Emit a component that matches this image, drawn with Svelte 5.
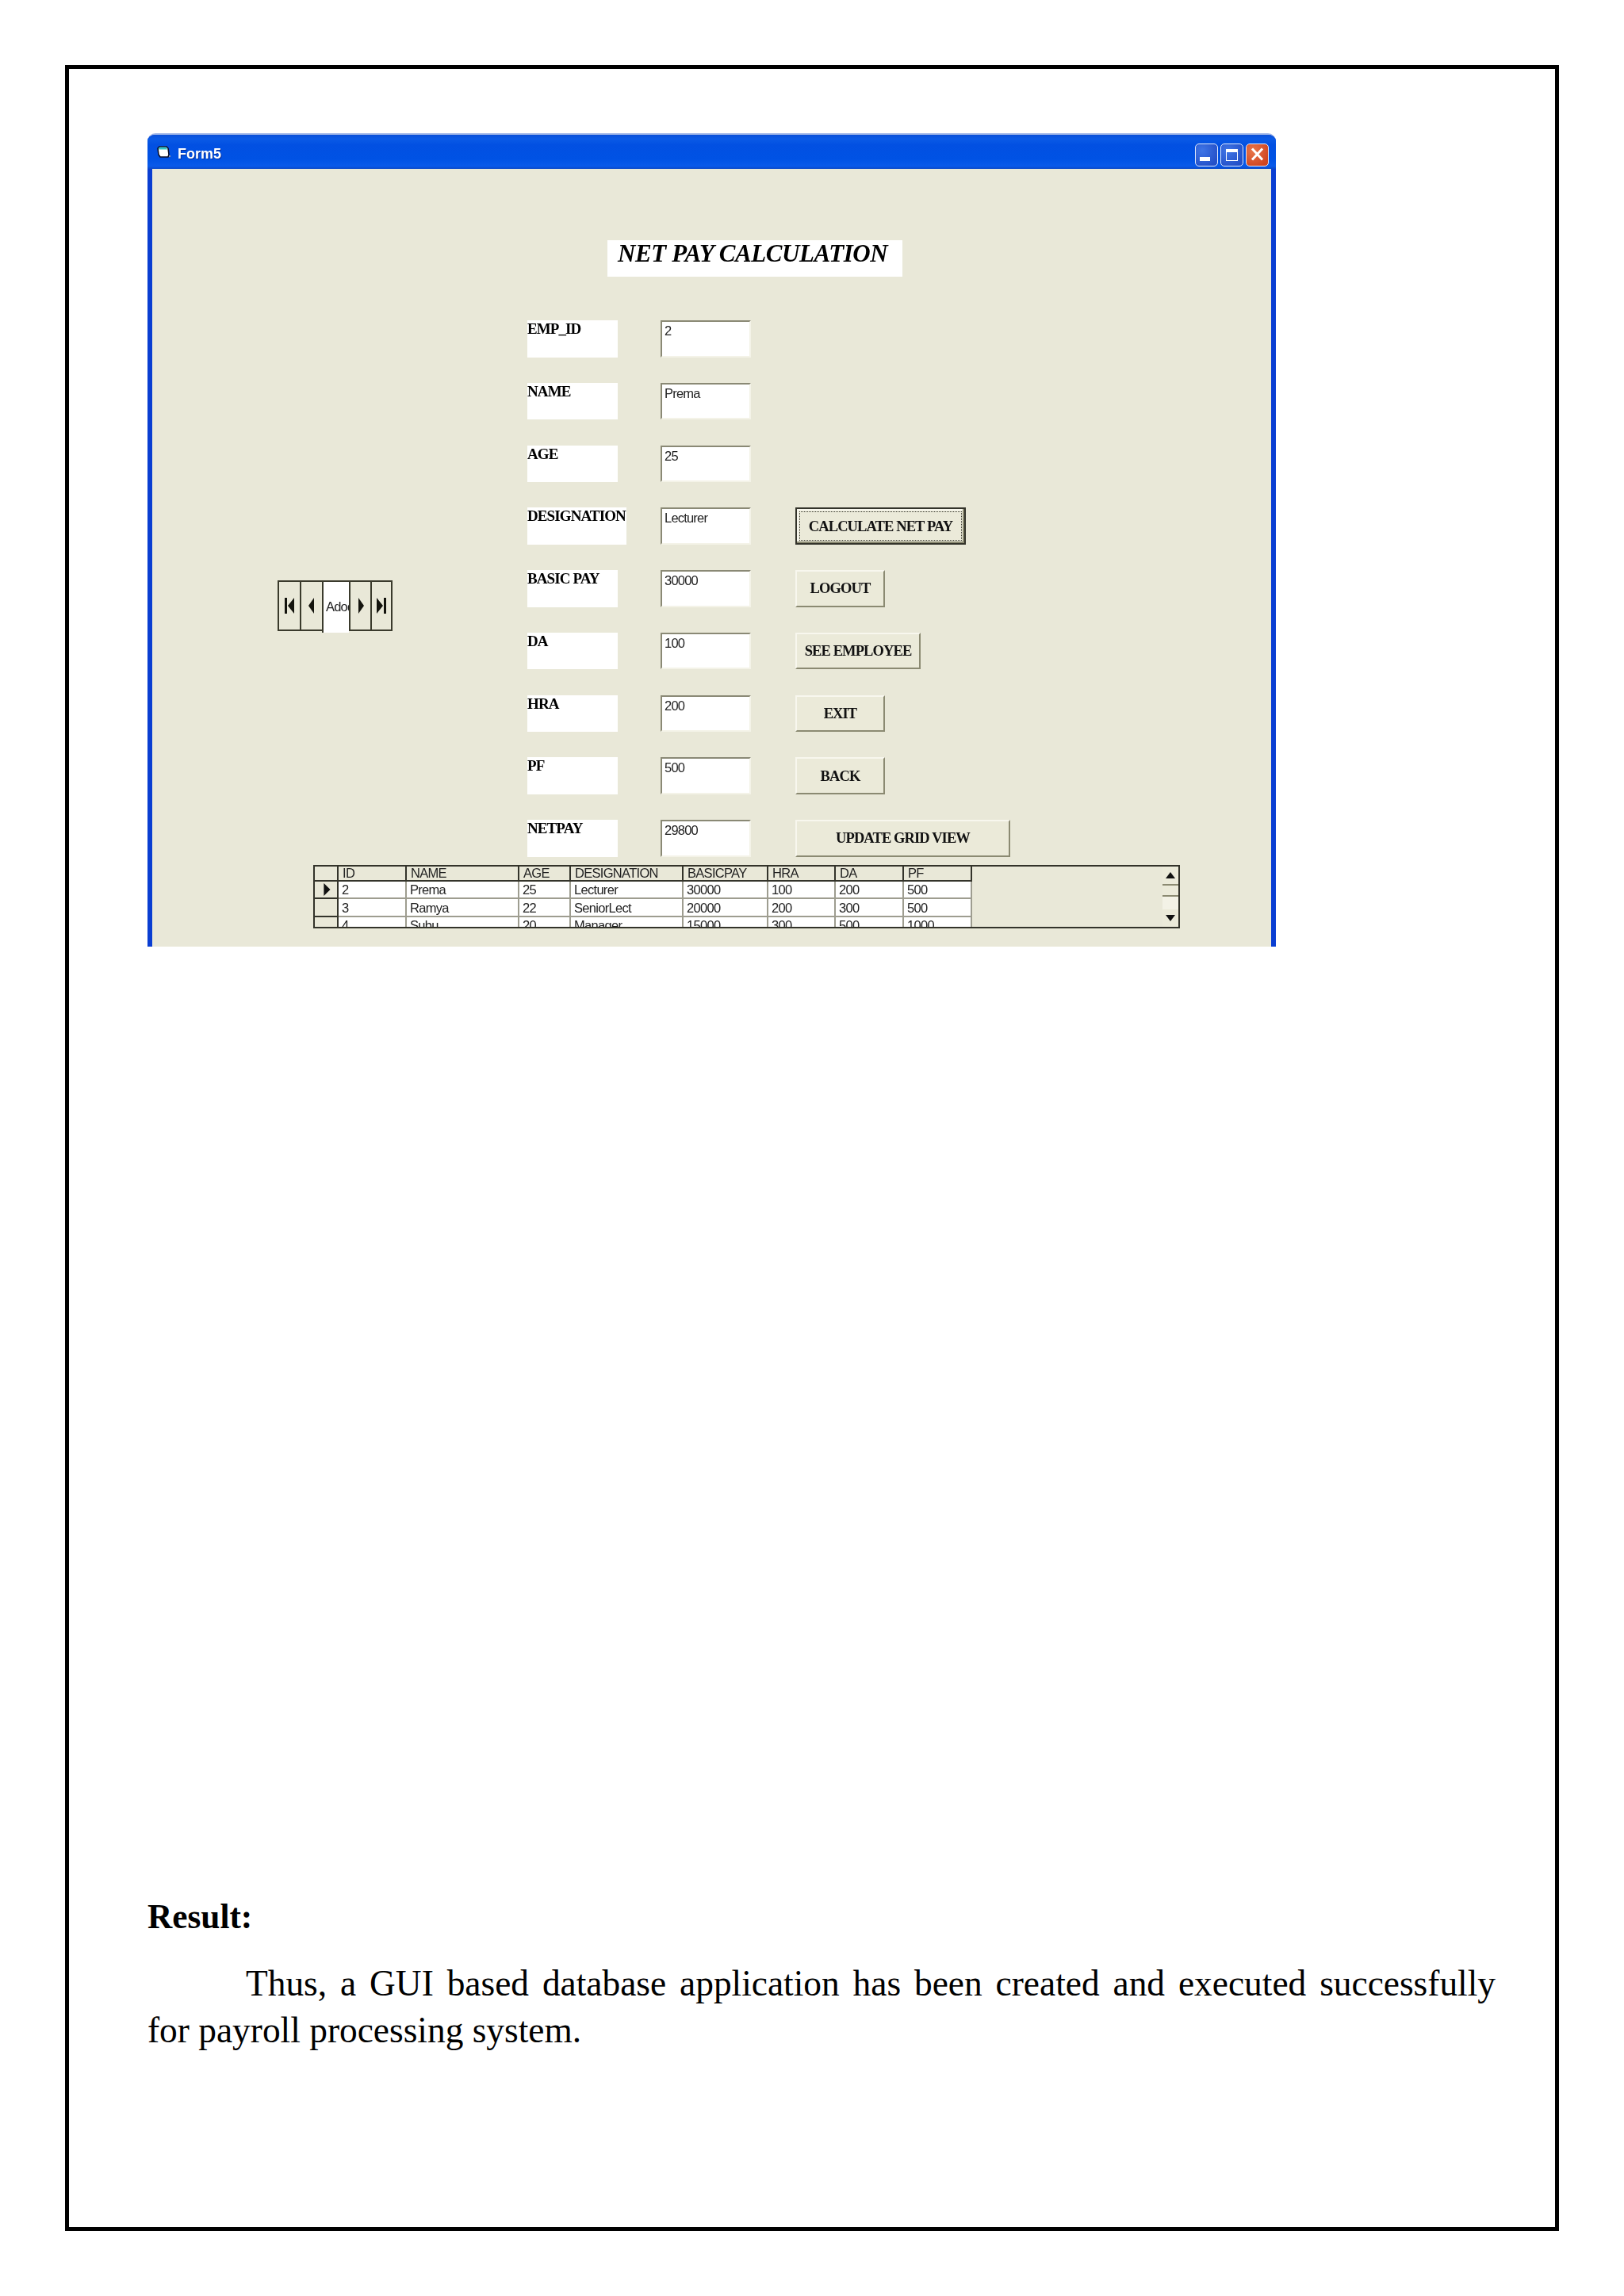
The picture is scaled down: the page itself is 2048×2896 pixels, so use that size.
<script>
  const fields = [
    { label: 'EMP_ID', value: '2' },
    { label: 'NAME', value: 'Prema' },
    { label: 'AGE', value: '25' },
    { label: 'DESIGNATION', value: 'Lecturer', wide: true, btn: 'CALCULATE NET PAY', size: 'calc' },
    { label: 'BASIC PAY', value: '30000', btn: 'LOGOUT', size: 'small' },
    { label: 'DA', value: '100', btn: 'SEE EMPLOYEE', size: 'emp' },
    { label: 'HRA', value: '200', btn: 'EXIT', size: 'small' },
    { label: 'PF', value: '500', btn: 'BACK', size: 'small' },
    { label: 'NETPAY', value: '29800', btn: 'UPDATE GRID VIEW', size: 'update' }
  ];

  const columns = [
    { name: 'ID', w: 86 },
    { name: 'NAME', w: 142 },
    { name: 'AGE', w: 65 },
    { name: 'DESIGNATION', w: 142 },
    { name: 'BASICPAY', w: 107 },
    { name: 'HRA', w: 85 },
    { name: 'DA', w: 86 },
    { name: 'PF', w: 86 }
  ];

  const rows = [
    ['2', 'Prema', '25', 'Lecturer', '30000', '100', '200', '500'],
    ['3', 'Ramya', '22', 'SeniorLect', '20000', '200', '300', '500'],
    ['4', 'Subu', '20', 'Manager', '15000', '300', '500', '1000']
  ];
</script>

<div class="page">
  <div class="frame">
    <div class="window">
      <div class="titlebar">
        <svg class="form-icon" viewBox="0 0 17 16" width="17" height="16">
          <path d="M1 3l2-2h9l2 2 1 8-1 3H4l-2-3z" fill="#fff" stroke="#0a0f2a" stroke-width="1.6" />
          <path d="M2 3l1.4-1.2h8.2L13 4.6H2.4z" fill="#2fc4c4" />
          <path d="M15 12h2v2h-2z" fill="#8a93b0" />
        </svg>
        <span class="caption">Form5</span>
        <div class="caption-btns">
          <span class="cbtn"><i class="min"></i></span>
          <span class="cbtn"><i class="max"></i></span>
          <span class="cbtn close">
            <svg viewBox="0 0 29 29" width="29" height="29">
              <path d="M8 7.5l13 14M21 7.5l-13 14" stroke="#fff" stroke-width="3" fill="none" />
            </svg>
          </span>
        </div>
      </div>

      <div class="client">
        <div class="heading">NET PAY CALCULATION</div>

        <div class="form">
          <div class="nav">
            <span class="navbtn">
              <svg viewBox="0 0 14 22" width="14" height="22"><path d="M1 1h3v20H1zM13 1v20L5 11z" /></svg>
            </span>
            <span class="navbtn">
              <svg viewBox="0 0 14 22" width="14" height="22"><path d="M10 1v20L3 11z" /></svg>
            </span>
            <span class="navtext">Adodc1</span>
            <span class="navbtn">
              <svg viewBox="0 0 14 22" width="14" height="22"><path d="M4 1v20l7-10z" /></svg>
            </span>
            <span class="navbtn last">
              <svg viewBox="0 0 14 22" width="14" height="22"><path d="M1 1v20l8-10zM10 1h3v20h-3z" /></svg>
            </span>
          </div>

          <div class="fields">
            {#each fields as f}
              <div class="label" class:wide={f.wide}>{f.label}</div>
              <div class="input">{f.value}</div>
              {#if f.btn}
                <button class="btn {f.size}"><span>{f.btn}</span></button>
              {:else}
                <div></div>
              {/if}
            {/each}
          </div>
        </div>

        <div class="grid">
          <table>
            <colgroup>
              <col style="width: 30px" />
              {#each columns as c}
                <col style="width: {c.w}px" />
              {/each}
            </colgroup>
            <thead>
              <tr>
                <th class="corner"></th>
                {#each columns as c}
                  <th>{c.name}</th>
                {/each}
              </tr>
            </thead>
            <tbody>
              {#each rows as row, i}
                <tr>
                  <td class="rowhead">
                    {#if i === 0}
                      <svg viewBox="0 0 12 20" width="12" height="18"><path d="M2 1v18l9-9z" /></svg>
                    {/if}
                  </td>
                  {#each row as cell}
                    <td>{cell}</td>
                  {/each}
                </tr>
              {/each}
            </tbody>
          </table>
          <div class="scrollbar">
            <div class="sbtn"><svg viewBox="0 0 12 8" width="12" height="8"><path d="M6 0l6 8H0z" /></svg></div>
            <div class="sthumb"></div>
            <div class="strack"></div>
            <div class="sbtn"><svg viewBox="0 0 12 8" width="12" height="8"><path d="M0 0h12L6 8z" /></svg></div>
          </div>
        </div>
      </div>
    </div>

    <div class="result">
      <h2>Result:</h2>
      <p class="first">Thus, a GUI based database application has been created and executed successfully</p>
      <p>for payroll processing system.</p>
    </div>
  </div>
</div>

<style>
  :global(body) {
    margin: 0;
    background: #fff;
  }

  .page {
    width: 2048px;
    height: 2896px;
    padding: 82px 82px 0;
    box-sizing: border-box;
    background: #fff;
    overflow: hidden;
  }

  .frame {
    height: 2732px;
    border: 5px solid #000;
    box-sizing: border-box;
    padding: 81px 0 0 99px;
  }

  .window {
    width: 1423px;
    height: 1026px;
    border-top: 2px solid #a3b8e8;
    border-radius: 10px 10px 0 0;
    box-sizing: border-box;
    overflow: hidden;
    background: #0a3ed2;
    display: flex;
    flex-direction: column;
    filter: blur(0.5px);
  }

  .titlebar {
    height: 43px;
    flex: none;
    display: flex;
    align-items: center;
    padding: 0 9px 0 12px;
    background: linear-gradient(#0a50d8 0, #0a5ae6 12%, #0250e2 30%, #0052e4 70%, #0a5aea 92%, #0a48c8 100%);
  }

  .form-icon {
    flex: none;
    margin-top: 1px;
  }

  .caption {
    margin: 4px 0 0 9px;
    color: #fff;
    font: bold 18px/20px "Liberation Sans", sans-serif;
    text-shadow: 1px 1px 0 #0a2f9a;
  }

  .caption-btns {
    margin-left: auto;
    margin-top: 7px;
    display: flex;
    gap: 3px;
  }

  .cbtn {
    width: 29px;
    height: 29px;
    box-sizing: border-box;
    border: 1.5px solid #dfe8fb;
    border-radius: 5px;
    background: radial-gradient(circle at 30% 30%, #3f75e6, #2450c8 80%);
    display: flex;
    align-items: center;
    justify-content: center;
    position: relative;
  }

  .cbtn i {
    display: block;
    background: #fff;
  }

  .cbtn .min {
    width: 13px;
    height: 5px;
    margin: 11px 4px 0 0;
  }

  .cbtn .max {
    width: 15px;
    height: 15px;
    box-sizing: border-box;
    background: transparent;
    border: 1.5px solid #fff;
    border-top-width: 4px;
  }

  .cbtn.close {
    background: radial-gradient(circle at 30% 30%, #e8764a, #cf4420 80%);
  }

  .cbtn.close svg {
    position: absolute;
    left: -1.5px;
    top: -1.5px;
  }

  .client {
    flex: 1;
    margin: 0 6px;
    background: #e9e8d8;
    display: flex;
    flex-direction: column;
    align-items: flex-start;
    min-height: 0;
  }

  .heading {
    margin: 90px 0 0 574px;
    width: 372px;
    height: 46px;
    box-sizing: border-box;
    padding: 1px 0 0 13px;
    background: #fff;
    color: #000;
    font: italic bold 31px/32px "Liberation Serif", serif;
    letter-spacing: -0.4px;
    white-space: nowrap;
  }

  .form {
    margin: 55px 0 0 158px;
    display: flex;
    align-items: flex-start;
  }

  .nav {
    width: 145px;
    height: 67px;
    margin: 328px 170px 0 0;
    flex: none;
    display: flex;
    box-sizing: border-box;
    background: #e9e8d8;
  }

  .navbtn {
    width: 28px;
    height: 64px;
    box-sizing: border-box;
    border: 2px solid #3a3a2c;
    border-right: 0;
    display: flex;
    align-items: center;
    justify-content: center;
  }

  .navbtn.last {
    border-right: 2px solid #3a3a2c;
    width: 28px;
  }

  .navbtn svg {
    fill: #14140e;
  }

  .navtext {
    width: 34px;
    height: 66px;
    box-sizing: border-box;
    background: #fff;
    border-left: 2px solid #3a3a2c;
    border-top: 2px solid #3a3a2c;
    overflow: hidden;
    padding: 21px 0 0 3px;
    font: 16.5px/20px "Liberation Sans", sans-serif;
    letter-spacing: -0.8px;
    color: #222;
    white-space: nowrap;
  }

  .navtext + .navbtn {
    border-left: 2px solid #3a3a2c;
    width: 27px;
  }

  .fields {
    display: grid;
    grid-template-columns: 168px 170px auto;
    grid-auto-rows: 46.5px;
    row-gap: 32.25px;
  }

  .label {
    width: 114px;
    height: 46.5px;
    background: #fff;
    color: #000;
    font: bold 19px/21px "Liberation Serif", serif;
    letter-spacing: -0.9px;
    white-space: nowrap;
  }

  .label.wide {
    width: 125px;
  }

  .input {
    width: 114px;
    height: 46.5px;
    box-sizing: border-box;
    background: #fff;
    border-top: 2px solid #8a8975;
    border-left: 2px solid #8a8975;
    border-right: 2px solid #f4f3e8;
    border-bottom: 2px solid #f4f3e8;
    padding: 1px 0 0 3px;
    color: #222;
    font: 16.5px/20px "Liberation Sans", sans-serif;
    letter-spacing: -0.8px;
  }

  .btn {
    height: 46.5px;
    padding: 0;
    box-sizing: border-box;
    justify-self: start;
    background: #ebead9;
    border-top: 2px solid #f8f7ee;
    border-left: 2px solid #f8f7ee;
    border-right: 2px solid #8b8a72;
    border-bottom: 2px solid #8b8a72;
    color: #111;
    font: bold 18.5px/20px "Liberation Serif", serif;
    letter-spacing: -0.9px;
    white-space: nowrap;
    display: flex;
    align-items: center;
    justify-content: center;
  }

  .small { width: 113px; }
  .emp { width: 158px; }
  .update { width: 271px; }

  .calc {
    width: 215px;
    border: 2px solid #33332a;
    box-shadow: inset -2px -2px 0 #8b8a72, inset 2px 2px 0 #f8f7ee;
    padding: 3px;
  }

  .calc span {
    flex: 1;
    align-self: stretch;
    display: flex;
    align-items: center;
    justify-content: center;
    border: 1.5px dotted #33332a;
  }

  .grid {
    width: 1093px;
    height: 80px;
    margin: 10px 0 0 203px;
    box-sizing: border-box;
    border: 2px solid #33332a;
    display: flex;
    overflow: hidden;
    background: #e9e8d8;
  }

  table {
    width: 827px;
    flex: none;
    table-layout: fixed;
    border-collapse: separate;
    border-spacing: 0;
    font: 16.5px/18px "Liberation Sans", sans-serif;
    letter-spacing: -0.7px;
    color: #222;
    align-self: flex-start;
  }

  th {
    height: 19px;
    padding: 0 0 0 5px;
    font-weight: normal;
    line-height: 17px;
    text-align: left;
    box-sizing: border-box;
    border-right: 2px solid #33332a;
    border-bottom: 2px solid #33332a;
    overflow: hidden;
    white-space: nowrap;
  }

  td {
    height: 22.7px;
    padding: 0 0 0 4px;
    box-sizing: border-box;
    background: #fff;
    border-right: 2px solid #9e9d90;
    border-bottom: 2px solid #9e9d90;
    overflow: hidden;
    white-space: nowrap;
  }

  td.rowhead {
    background: #e9e8d8;
    border-right: 2px solid #33332a;
    border-bottom: 2px solid #33332a;
    padding: 0 0 0 9px;
    line-height: 0;
  }

  td.rowhead svg {
    display: block;
    fill: #111;
  }

  .scrollbar {
    width: 20px;
    margin-left: auto;
    display: flex;
    flex-direction: column;
    background: #f3f2e6;
  }

  .sbtn {
    height: 22px;
    flex: none;
    background: #ebead9;
    display: flex;
    align-items: center;
    justify-content: center;
  }

  .sbtn svg {
    fill: #111;
  }

  .sthumb {
    height: 12px;
    flex: none;
    background: #ebead9;
    border-top: 2px solid #8b8a72;
    border-bottom: 2px solid #8b8a72;
  }

  .strack {
    flex: 1;
  }

  .result {
    margin-top: 1194px;
    width: 1700px;
    color: #000;
    font-family: "Liberation Serif", serif;
  }

  h2 {
    margin: 0;
    font-size: 43.3px;
    line-height: 59px;
    font-weight: bold;
  }

  .result p {
    margin: 0;
    font-size: 45.4px;
    line-height: 59px;
  }

  .result p.first {
    margin-top: 26px;
    text-indent: 124px;
    text-align: justify;
    text-align-last: justify;
  }
</style>
